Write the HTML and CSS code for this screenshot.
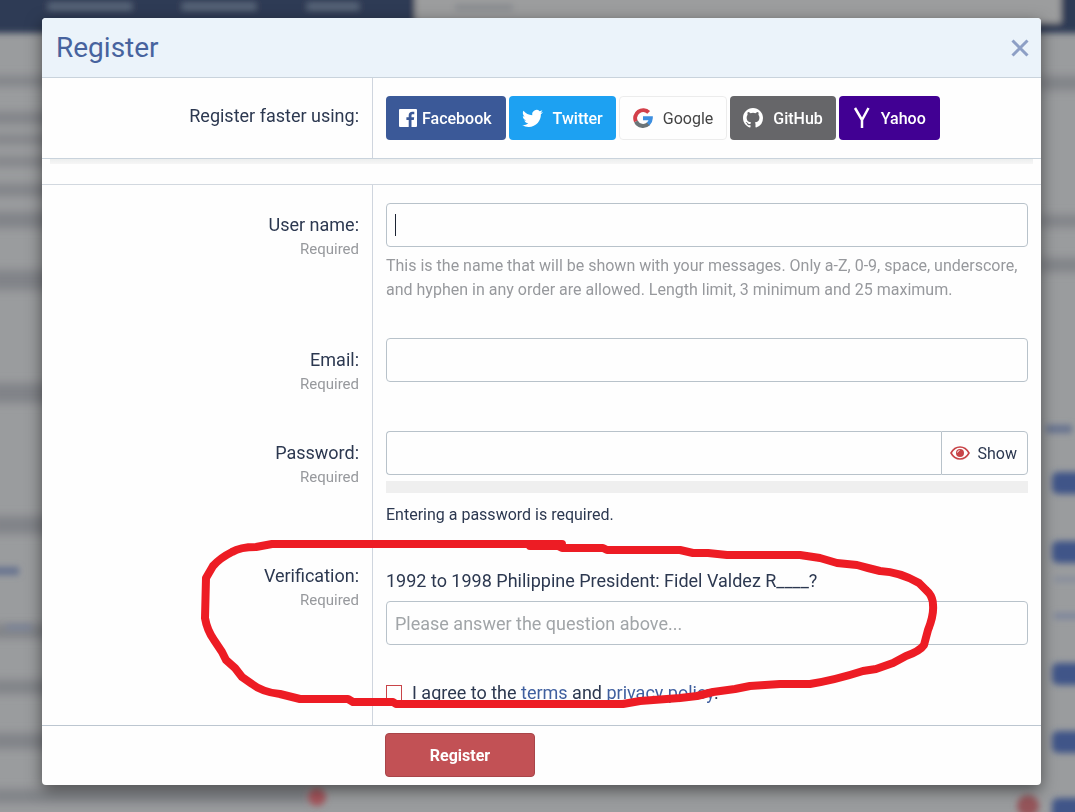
FILE: index.html
```html
<!DOCTYPE html>
<html lang="en">
<head>
  <meta charset="UTF-8">
  <meta name="viewport" content="width=device-width, initial-scale=1.0">
  <title>Register</title>
  <link rel="stylesheet" href="styles.css">
</head>
<body>
  <!-- dimmed forum page behind the overlay -->
  <svg class="backdrop" viewBox="0 0 1075 812" preserveAspectRatio="none" aria-hidden="true">
    <defs>
      <filter id="soft" x="-10%" y="-50%" width="120%" height="200%"><feGaussianBlur stdDeviation="3"/></filter>
      <filter id="softer" x="-10%" y="-50%" width="120%" height="200%"><feGaussianBlur stdDeviation="5"/></filter>
    </defs>
    <rect width="1075" height="812" fill="#9a9c9e"/>
    <g filter="url(#softer)" fill="#818388">
      <rect x="-10" y="76" width="60" height="10"/>
      <rect x="-10" y="112" width="60" height="12"/>
      <rect x="-10" y="135" width="60" height="9"/>
      <rect x="-10" y="157" width="60" height="9"/>
      <rect x="-10" y="184" width="60" height="12"/>
      <rect x="-10" y="212" width="60" height="16"/>
      <rect x="-10" y="270" width="60" height="20"/>
      <rect x="-10" y="383" width="60" height="20"/>
      <rect x="-10" y="516" width="60" height="18"/>
      <rect x="-10" y="624" width="60" height="14"/>
      <rect x="-10" y="680" width="60" height="14"/>
      <rect x="-10" y="733" width="60" height="16"/>
      <rect x="-10" y="789" width="320" height="14"/>
      <rect x="1040" y="76" width="50" height="14"/>
      <rect x="1040" y="215" width="50" height="12"/>
      <rect x="1040" y="258" width="50" height="14"/>
    </g>
    <g filter="url(#soft)">
      <rect x="-20" y="-20" width="1120" height="53" fill="#2d3b55"/>
      <rect x="415" y="-20" width="646" height="43" fill="#9c9d9e"/>
      <g fill="#5c697d">
        <rect x="48" y="3" width="84" height="7"/>
        <rect x="182" y="3" width="74" height="7"/>
        <rect x="307" y="3" width="52" height="7"/>
      </g>
      <rect x="455" y="4" width="58" height="7" fill="#898c91"/>
      <rect x="-10" y="567" width="29" height="8" fill="#66728f"/>
      <rect x="6" y="625" width="26" height="5" fill="#7b849b"/>
      <rect x="1046" y="425" width="26" height="8" fill="#66728f"/>
      <rect x="1054" y="577" width="30" height="5" fill="#858c9c"/>
      <rect x="1054" y="613" width="30" height="6" fill="#7b849b"/>
      <g fill="#405588">
        <rect x="1052" y="472" width="40" height="22" rx="6"/>
        <rect x="1052" y="541" width="40" height="22" rx="6"/>
        <rect x="1052" y="663" width="40" height="22" rx="6"/>
        <rect x="1052" y="731" width="40" height="22" rx="6"/>
        <rect x="1052" y="798" width="40" height="24" rx="6"/>
      </g>
      <circle cx="317" cy="797" r="9" fill="#a5555b"/>
      <circle cx="1028" cy="806" r="11" fill="#95545a"/>
    </g>
  </svg>

  <main class="overlay">
    <header class="overlay-title">
      <h1>Register</h1>
      <button type="button" class="close" aria-label="Close">
        <svg viewBox="0 0 18 18" width="18" height="18" fill="none" stroke="#8d9fc5" stroke-width="3"><path d="M1.500 1.500l15 15M16.500 1.500l-15 15"/></svg>
      </button>
    </header>

    <form>
      <div class="row row-social">
        <div class="label-cell"><span class="label">Register faster using:</span></div>
        <div class="field providers">
          <button type="button" class="provider facebook">
            <svg viewBox="0 0 18 18" width="18" height="18"><path fill="#fff" d="M1 0h16a1 1 0 0 1 1 1v16a1 1 0 0 1-1 1h-4.500v-7h2.300l.4-2.700h-2.700V6.600c0-.9.300-1.400 1.400-1.400h1.400V2.800c-.3 0-1.100-.1-2-.1-2.200 0-3.600 1.300-3.600 3.600v2H7.400V11h2.300v7H1a1 1 0 0 1-1-1V1a1 1 0 0 1 1-1z"/></svg>
            Facebook
          </button>
          <button type="button" class="provider twitter">
            <svg viewBox="0 0 24 24" width="21" height="21"><path fill="#fff" d="M23.950 4.570a10 10 0 0 1-2.820.770 4.960 4.960 0 0 0 2.160-2.720c-.950.550-2 .950-3.130 1.180a4.920 4.920 0 0 0-8.380 4.480C7.690 8.090 4.070 6.130 1.640 3.160a4.820 4.820 0 0 0-.670 2.480c0 1.710.870 3.210 2.190 4.100a4.900 4.900 0 0 1-2.230-.620v.060a4.920 4.920 0 0 0 3.950 4.830 5 5 0 0 1-2.210.080 4.940 4.940 0 0 0 4.600 3.420A9.870 9.870 0 0 1 0 19.540a13.990 13.990 0 0 0 7.550 2.210c9.050 0 14-7.500 14-13.980 0-.210 0-.420-.020-.630a9.930 9.930 0 0 0 2.460-2.550z"/></svg>
            Twitter
          </button>
          <button type="button" class="provider google">
            <svg viewBox="0 0 20 20" width="20" height="20" fill="none" stroke-width="4">
              <path stroke="#d3404a" d="M2.900 13.500A8 8 0 0 1 15.700 4.400"/>
              <path stroke="#6b7478" d="M2.900 13.500A8 8 0 0 0 15.500 15.700"/>
              <path stroke="#3d8fe0" d="M10 10.200h7.800a8 8 0 0 1-2.600 5.700"/>
            </svg>
            Google
          </button>
          <button type="button" class="provider github">
            <svg viewBox="0 0 16 16" width="20" height="20"><path fill="#fff" d="M8 0C3.580 0 0 3.580 0 8c0 3.540 2.290 6.530 5.470 7.590.4.070.550-.170.550-.380 0-.190-.010-.820-.010-1.490-2.010.370-2.530-.490-2.690-.940-.090-.230-.480-.940-.820-1.130-.280-.150-.680-.520-.010-.530.630-.010 1.080.580 1.230.820.720 1.210 1.870.870 2.330.660.070-.520.280-.870.510-1.070-1.780-.2-3.640-.890-3.640-3.950 0-.870.310-1.590.820-2.150-.080-.2-.360-1.020.080-2.120 0 0 .670-.210 2.200.820a7.640 7.640 0 0 1 4 0c1.530-1.040 2.200-.820 2.200-.820.440 1.100.160 1.920.080 2.120.510.560.820 1.270.820 2.150 0 3.070-1.870 3.750-3.650 3.950.290.250.540.730.540 1.480 0 1.070-.010 1.930-.010 2.200 0 .210.150.460.550.380A8 8 0 0 0 16 8c0-4.420-3.580-8-8-8z"/></svg>
            GitHub
          </button>
          <button type="button" class="provider yahoo">
            <svg viewBox="0 0 18 22" width="18" height="22" fill="none" stroke="#fff" stroke-width="2.500"><path d="M2 1l7 12 6.500-12M9 12v9"/></svg>
            Yahoo
          </button>
        </div>
      </div>

      <div class="separator"></div>

      <div class="row">
        <div class="label-cell">
          <label class="label" for="username">User name:</label>
          <span class="required">Required</span>
        </div>
        <div class="field">
          <div class="input-wrap">
            <input type="text" id="username" class="input">
            <span class="caret"></span>
          </div>
          <p class="explain">This is the name that will be shown with your messages. Only a-Z, 0-9, space, underscore, and hyphen in any order are allowed. Length limit, 3 minimum and 25 maximum.</p>
        </div>
      </div>

      <div class="row">
        <div class="label-cell">
          <label class="label" for="email">Email:</label>
          <span class="required">Required</span>
        </div>
        <div class="field field-email">
          <input type="email" id="email" class="input">
        </div>
      </div>

      <div class="row">
        <div class="label-cell">
          <label class="label" for="password">Password:</label>
          <span class="required">Required</span>
        </div>
        <div class="field field-password">
          <div class="input-group">
            <input type="password" id="password" class="input">
            <button type="button" class="show">
              <svg viewBox="0 0 20 14" width="20" height="14"><path d="M1 7c2-3.700 5.300-6 9-6s7 2.300 9 6c-2 3.700-5.300 6-9 6S3 10.700 1 7z" fill="none" stroke="#c84448" stroke-width="1.600"/><circle cx="10" cy="7" r="4" fill="#c84448"/><path d="M7.500 6.500a2.500 2.500 0 0 1 2-2" fill="none" stroke="#fff"/></svg>
              Show
            </button>
          </div>
          <div class="meter"></div>
          <p class="message">Entering a password is required.</p>
        </div>
      </div>

      <div class="row">
        <div class="label-cell">
          <label class="label" for="answer">Verification:</label>
          <span class="required">Required</span>
        </div>
        <div class="field field-question">
          <p class="question">1992 to 1998 Philippine President: Fidel Valdez R____?</p>
          <input type="text" id="answer" class="input" placeholder="Please answer the question above...">
        </div>
      </div>

      <div class="row">
        <div class="label-cell"></div>
        <div class="field agree">
          <input type="checkbox" id="agree">
          <label for="agree">I agree to the <a href="#">terms</a> and <a href="#">privacy policy</a>.</label>
        </div>
      </div>

      <div class="submit-row">
        <button type="submit" class="submit">Register</button>
      </div>
    </form>

    <!-- hand-drawn highlight around the verification question -->
    <svg class="marker" viewBox="42 18 999 767" preserveAspectRatio="none" aria-hidden="true">
      <path d="M562 544L272 544 256 547Q240 547 232 552Q220 558 213 566L206 578 205 618Q207 630 214 640L222 652 226 660 235 668 242 677 252 684Q262 692 280 694L300 699 348 699 353 702 393 702 396 704 440 704 623 704 640 701 680 698 697 696 713 692 735 689 750 686 780 684 810 684Q835 680 863 671L876 669 893 663 906 656Q920 651 924 645L928 630Q934 615 933 605Q933 596 926 590L919 583Q900 572 880 571L868 568 857 565 837 563 820 558 800 555 727 555 708 553 693 553 680 550 607 550 603 548 562 548 558 546 530 546"/>
    </svg>
  </main>
</body>
</html>
```
FILE: styles.css
```css
* {
  box-sizing: border-box;
}
body {
  font-family: Roboto, "Liberation Sans", sans-serif;
  font-size: 18px;
  line-height: 24px;
  color: #2c3850;
  background-color: #9a9c9e;
  margin: 0;
  padding: 18px 34px 27px 42px;
}
h1,
p {
  margin: 0;
}
a {
  color: #3f5f9f;
  text-decoration: none;
}
button,
input {
  font-family: inherit;
  color: inherit;
}
button {
  cursor: pointer;
}
.backdrop {
  position: fixed;
  top: 0;
  left: 0;
  width: 100%;
  height: 100%;
}
.overlay {
  position: relative;
  background-color: #fefefe;
  border-radius: 4px;
  box-shadow: 0 5px 16px rgba(0, 0, 0, 0.5);
}
.overlay-title {
  display: flex;
  align-items: center;
  justify-content: space-between;
  height: 60px;
  padding: 0 12px 0 14px;
  background-color: #ebf3fa;
  border-bottom: 1px solid #c9d3dc;
  border-radius: 4px 4px 0 0;
}
h1 {
  font-size: 28px;
  font-weight: 400;
  color: #47639e;
}
.close {
  display: flex;
  padding: 0;
  background: none;
  border: 0;
}
.row {
  display: grid;
  grid-template-columns: 331px 1fr;
}
.label-cell {
  padding: 28px 13px 0;
  border-right: 1px solid #cfd5de;
  text-align: right;
}
.label {
  display: block;
}
.required {
  display: block;
  font-size: 15px;
  color: #97999d;
}
.field {
  padding: 18px 13px;
}
.row-social {
  border-bottom: 1px solid #c9d3dc;
}
.row-social .label-cell {
  padding-top: 26px;
}
.providers {
  display: flex;
  flex-wrap: wrap;
  gap: 3px;
}
.provider {
  display: flex;
  align-items: center;
  gap: 10px;
  height: 44px;
  padding: 0 13px;
  font-size: 16px;
  font-weight: 500;
  color: #fff;
  border: 0;
  border-radius: 4px;
}
.facebook {
  gap: 5px;
  padding: 0 14px 0 13px;
  background-color: #3b5998;
}
.twitter {
  background-color: #1da1f2;
}
.google {
  font-weight: 400;
  color: #444;
  background-color: #fefefe;
  border: 1px solid #ececec;
}
.github {
  background-color: #666669;
}
.yahoo {
  padding: 0 14px;
  background-color: #410093;
}
.separator {
  height: 26px;
  border-bottom: 1px solid #d2d8df;
}
.separator::before {
  content: "";
  display: block;
  height: 5px;
  margin: 0 8px;
  background: linear-gradient(#eceeee, #f6f6f6);
}
.input {
  display: block;
  width: 100%;
  height: 44px;
  padding: 0 8px;
  font-size: 18px;
  background-color: #fefefe;
  border: 1px solid #b8c2ca;
  border-radius: 4px;
}
.input::placeholder {
  color: #a1a5a8;
}
.input-wrap {
  position: relative;
}
.caret {
  position: absolute;
  top: 11px;
  left: 9px;
  width: 1px;
  height: 22px;
  background-color: #1c2433;
}
.explain {
  padding-top: 7px;
  font-size: 16px;
  color: #97999d;
}
.field-email {
  padding-bottom: 31px;
}
.field-password {
  padding-bottom: 9px;
}
.input-group {
  display: flex;
}
.input-group .input {
  flex: 1;
  border-right: 0;
  border-radius: 4px 0 0 4px;
}
.show {
  display: flex;
  align-items: center;
  gap: 8px;
  height: 44px;
  padding: 0 10px 0 8px;
  font-size: 16px;
  background-color: #fefefe;
  border: 1px solid #b8c2ca;
  border-radius: 0 4px 4px 0;
}
.meter {
  height: 12px;
  margin: 6px 0 10px;
  background-color: #efefef;
}
.message {
  font-size: 16px;
}
.field-question {
  padding-top: 33px;
}
.question {
  margin-bottom: 8px;
}
.agree {
  display: flex;
  align-items: center;
  gap: 10px;
  padding-bottom: 20px;
}
.agree input {
  appearance: none;
  width: 16px;
  height: 16px;
  margin: 0;
  border: 1px solid #c84448;
}
.submit-row {
  padding: 7px 0 8px 343px;
  border-top: 1px solid #bcc6d0;
}
.submit {
  display: block;
  width: 150px;
  height: 44px;
  font-size: 16px;
  font-weight: 700;
  color: #fff;
  background-color: #c25155;
  border: 1px solid #a94549;
  border-radius: 4px;
}
.marker {
  position: absolute;
  top: 0;
  left: 0;
  width: 100%;
  height: 100%;
  fill: none;
  stroke: #ed1c24;
  stroke-width: 8;
  stroke-linecap: round;
  stroke-linejoin: round;
  pointer-events: none;
}
```
